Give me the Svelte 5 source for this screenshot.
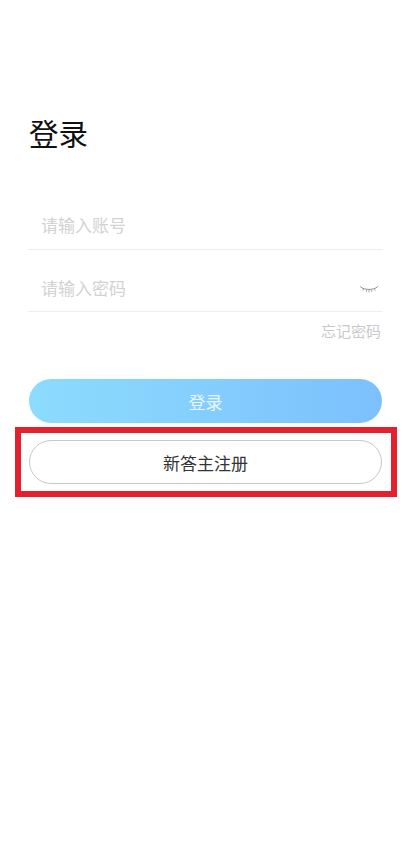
<script lang="ts">
	let account = $state('');
	let password = $state('');
</script>

<main class="page">
	<h1 class="title">登录</h1>

	<label class="field account">
		<input class="field-input" type="text" placeholder="请输入账号" bind:value={account} />
	</label>

	<label class="field secret">
		<input class="field-input" type="password" placeholder="请输入密码" bind:value={password} />
		<svg class="eye" viewBox="0 0 18 8" width="18" height="8" fill="none" stroke="#8f8f8f" stroke-width="0.8" aria-hidden="true">
			<path d="M.6 1C4.5 4.2 13.5 4.2 17.4 1" stroke-width="1" />
			<path d="M.6 1L.2 .2M17.4 1L17.9 .1M3.6 3L2.8 4.6M6.6 3.7L6.2 5.8M9 4V6.4M11.4 3.7L11.8 5.8M14.4 3L15.2 4.6" />
		</svg>
	</label>

	<div class="forgot-row">
		<span class="forgot">忘记密码</span>
	</div>

	<button class="login" type="button">登录</button>

	<div class="highlight">
		<button class="register" type="button">新答主注册</button>
	</div>
</main>

<style>
	:global(body) {
		margin: 0;
		background: #fff;
	}

	.page {
		box-sizing: border-box;
		height: 860px;
		padding: 116px 28px 0;
		font-family: 'Liberation Sans', 'Noto Sans CJK SC', sans-serif;
		overflow: hidden;
	}

	.title {
		margin: 0 0 52px 1px;
		font-size: 29.5px;
		line-height: 38px;
		font-weight: 400;
		color: #111;
	}

	.field {
		display: flex;
		align-items: center;
		box-sizing: border-box;
		width: 355px;
		border-bottom: 1px solid #eeeeee;
	}

	.account {
		height: 44px;
		padding-bottom: 2px;
	}

	.secret {
		height: 62px;
		padding-top: 18px;
	}

	.field-input {
		flex: 1;
		min-width: 0;
		padding: 0 0 0 13px;
		border: none;
		outline: none;
		background: transparent;
		font: inherit;
		font-size: 17px;
		color: #333;
	}

	.field-input::placeholder {
		color: #d2d2d2;
		opacity: 1;
	}

	.eye {
		margin-right: 5px;
	}

	.forgot-row {
		display: flex;
		justify-content: flex-end;
		width: 353px;
		margin-top: 10px;
	}

	.forgot {
		font-size: 15px;
		line-height: 20px;
		color: #c9c9c9;
	}

	.login {
		display: block;
		width: 353px;
		height: 44px;
		margin: 37px 0 0 1px;
		border: none;
		border-radius: 22px;
		background: linear-gradient(90deg, #8cdcfd, #7cc0fd);
		color: #eaf6ff;
		font: inherit;
		font-size: 17px;
	}

	.highlight {
		box-sizing: border-box;
		width: 382px;
		margin: 4px 0 0 -13px;
		padding: 7px 9px 7px 8px;
		border: 6px solid #e3202c;
	}

	.register {
		display: block;
		box-sizing: border-box;
		width: 353px;
		height: 44px;
		border: 1px solid #c8c8c8;
		border-radius: 22px;
		background: #fff;
		color: #333;
		font: inherit;
		font-size: 17px;
	}
</style>
